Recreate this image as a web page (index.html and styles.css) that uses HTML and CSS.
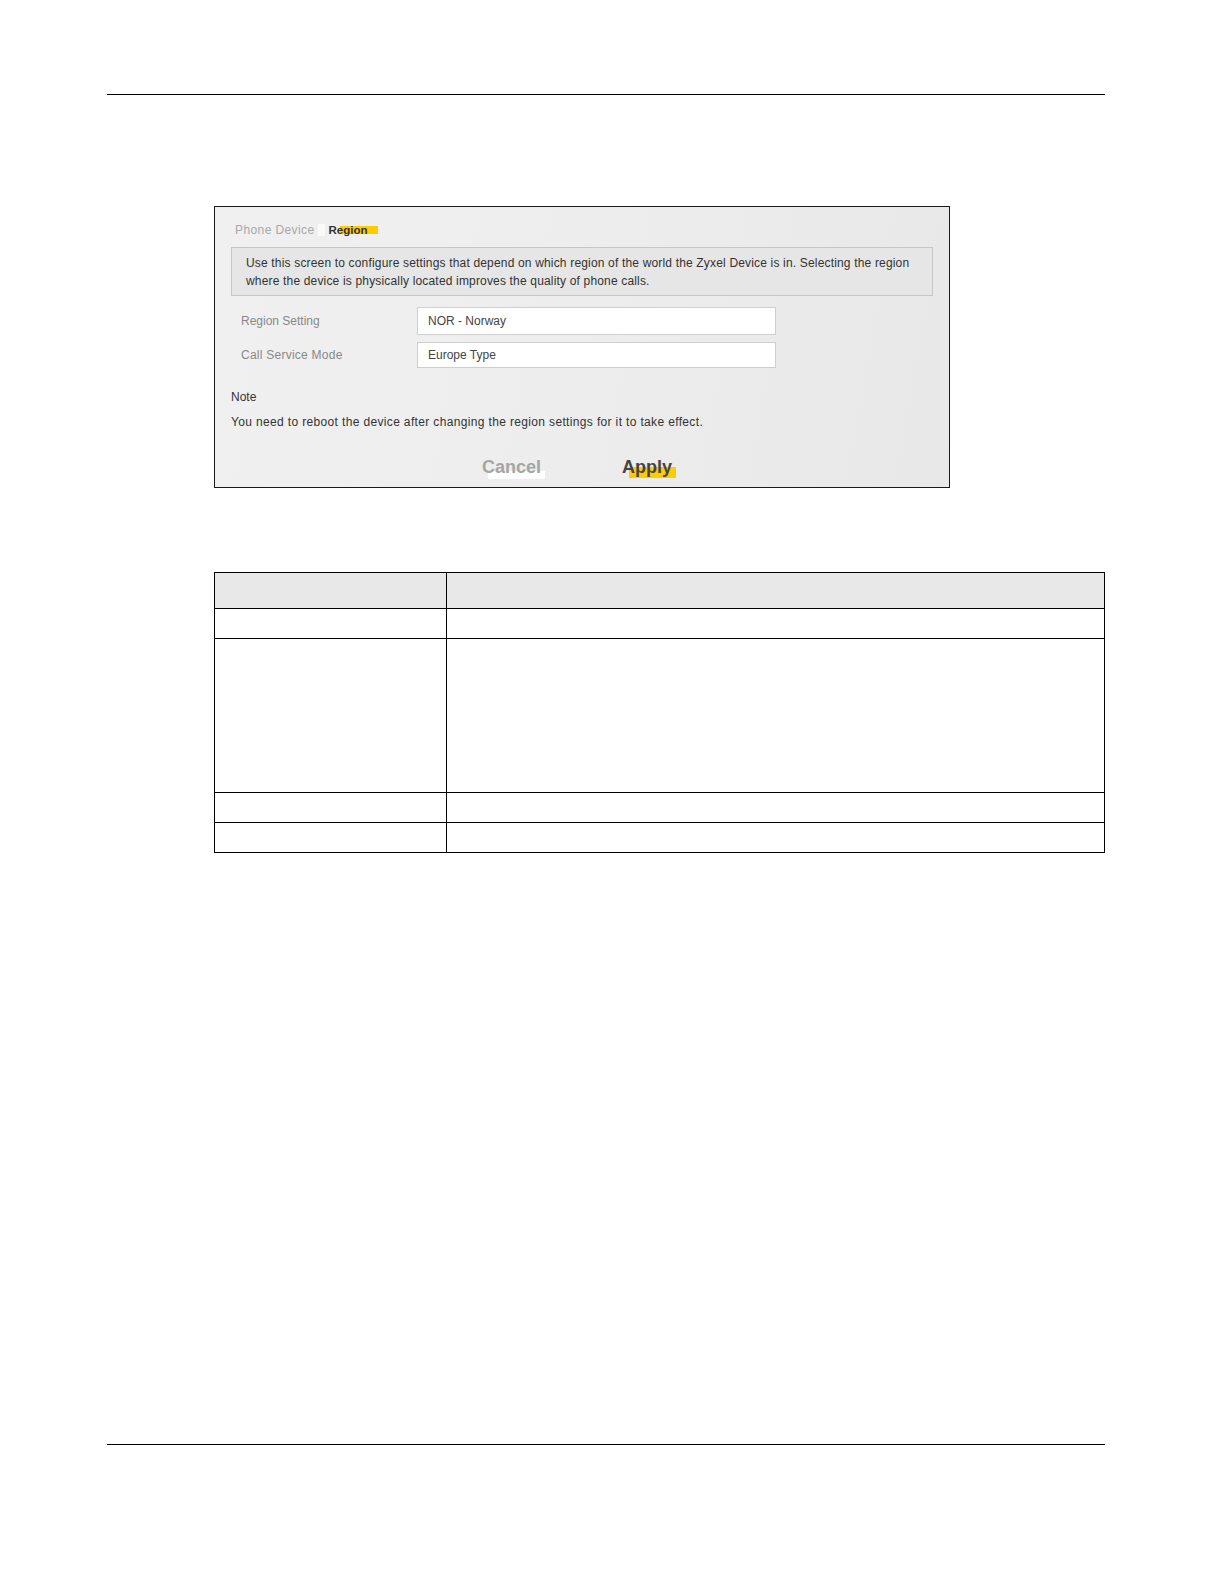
FILE: index.html
```html
<!DOCTYPE html>
<html>
<head>
<meta charset="utf-8">
<link rel="stylesheet" href="styles.css">
</head>
<body>
<div class="page">
  <div class="rule-top"></div>
  <div class="shot">
    <div class="tabs">
      <span class="tab tab-idle">Phone Device</span>
      <span class="tab tab-active">Region</span>
    </div>
    <div class="info">Use this screen to configure settings that depend on which region of the world the Zyxel Device is in. Selecting the region where the device is physically located improves the quality of phone calls.</div>
    <div class="form">
      <div class="row">
        <span class="label">Region Setting</span>
        <span class="field">NOR - Norway</span>
      </div>
      <div class="row">
        <span class="label">Call Service Mode</span>
        <span class="field field-b">Europe Type</span>
      </div>
    </div>
    <div class="note-title">Note</div>
    <div class="note-text">You need to reboot the device after changing the region settings for it to take effect.</div>
    <div class="buttons">
      <span class="btn btn-cancel">Cancel</span>
      <span class="btn btn-apply">Apply</span>
    </div>
  </div>
  <table class="desc">
    <tr class="head"><td class="c1"></td><td class="c2"></td></tr>
    <tr class="r1"><td></td><td></td></tr>
    <tr class="r2"><td></td><td></td></tr>
    <tr class="r1"><td></td><td></td></tr>
    <tr class="r1"><td></td><td></td></tr>
  </table>
  <div class="rule-bottom"></div>
</div>
</body>
</html>
```
FILE: styles.css
```css
html, body {
  margin: 0;
  padding: 0;
  background: #fff;
  overflow: hidden;
}
.page {
  width: 998px;
  padding: 94px 0 0 107px;
  font-family: "Liberation Sans", Arial, sans-serif;
}
.rule-top {
  border-top: 1.5px solid #000;
  height: 0;
}
.rule-bottom {
  border-top: 1.5px solid #000;
  height: 0;
  margin-top: 591px;
}
.shot {
  margin: 111px 0 0 107px;
  width: 734px;
  height: 280px;
  border: 1px solid #1a1a1a;
  background: linear-gradient(100deg, #f0f0f0 0%, #eeeeee 40%, #ebebeb 70%, #e8e8e8 100%);
  color: #555;
  font-size: 11px;
}
.tabs {
  display: flex;
  gap: 14px;
  padding: 16px 0 0 20px;
  height: 15px;
  line-height: 14px;
}
.tab {
  position: relative;
  z-index: 0;
}
.tab-idle {
  color: #a8a8a8;
  font-size: 12px;
  letter-spacing: 0.4px;
}
.tab-idle::after {
  content: "";
  position: absolute;
  left: calc(100% + 3px);
  width: 7px;
  top: 1px;
  height: 12px;
  background: #fafafa;
}
.tab-active {
  color: #333;
  font-weight: bold;
  font-size: 11.5px;
}
.tab-active::after {
  content: "";
  position: absolute;
  left: 11px;
  right: -10px;
  top: 3px;
  height: 8px;
  background: #ffcc00;
  z-index: -1;
}
.info {
  margin: 9px 16px 0 16px;
  border: 1px solid #c6c6c6;
  background: #e6e6e6;
  padding: 6px 14px 5px 14px;
  line-height: 18px;
  height: 36px;
  color: #333;
  font-size: 12px;
  letter-spacing: 0.17px;
}
.form {
  margin: 11px 0 0 26px;
  display: flex;
  flex-direction: column;
  gap: 7px;
}
.row {
  display: flex;
  align-items: center;
}
.label {
  width: 176px;
  color: #888;
  font-size: 12px;
}
.row:last-child .label {
  letter-spacing: 0.25px;
}
.field {
  width: 347px;
  height: 26px;
  line-height: 26px;
  padding-left: 10px;
  border: 1px solid #cfcfcf;
  background: #fff;
  color: #444;
  font-size: 12px;
}
.field-b {
  height: 24px;
  line-height: 24px;
}
.note-title {
  margin: 22px 0 0 16px;
  color: #333;
  font-size: 12px;
  line-height: 14px;
}
.note-text {
  margin: 11px 0 0 16px;
  color: #333;
  font-size: 12px;
  letter-spacing: 0.35px;
  line-height: 14px;
}
.buttons {
  display: flex;
  margin: 28px 0 0 267px;
  gap: 81px;
  line-height: 20px;
  font-size: 18px;
  font-weight: bold;
}
.btn {
  position: relative;
  z-index: 0;
}
.btn-cancel {
  color: #a5a5a5;
}
.btn-cancel::after {
  content: "";
  position: absolute;
  left: 6px;
  right: -4px;
  top: 14px;
  height: 8px;
  background: #fff;
  z-index: -1;
}
.btn-apply {
  color: #444;
}
.btn-apply::after {
  content: "";
  position: absolute;
  left: 7px;
  right: -4px;
  top: 10px;
  height: 11px;
  background: #ffcc00;
  z-index: -1;
}
.desc {
  margin: 84px 0 0 107px;
  width: 891px;
  border-collapse: collapse;
}
.desc td {
  border: 1.3px solid #000;
  padding: 0;
}
.desc .c1 {
  width: 231px;
}
.head td {
  background: #e8e8e8;
  height: 35px;
}
.r1 td {
  height: 29px;
}
.r2 td {
  height: 153px;
}
```
